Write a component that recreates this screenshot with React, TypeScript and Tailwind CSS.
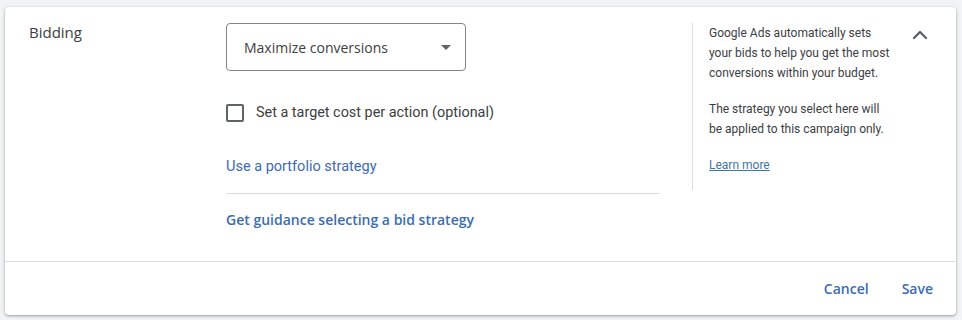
import { ChevronUp } from 'lucide-react';

export default function App() {
  const blue = 'text-[#3d6bb3]';

  return (
    <div className="w-[962px] h-[320px] bg-[#f1f3f4] pt-[7px] pl-[5px] font-['Roboto',sans-serif]">
      <div className="w-[951px] h-[308px] bg-white rounded-[4px] shadow-[0_1px_2px_rgba(60,64,67,0.3),0_1px_3px_1px_rgba(60,64,67,0.15)] flex flex-col">
        <div className="h-[255px] flex pl-6 pt-4 border-b border-[#dadce0]">
          <div className="w-[197px] font-['Open_Sans',sans-serif] text-[15px] leading-[18px] text-[#3c4043]">
            Bidding
          </div>

          <div className="w-[434px] flex flex-col">
            <button className="w-[240px] h-[48px] border border-[#80868b] rounded-[4px] flex items-center justify-between pl-[17px] pr-[14px] text-left">
              <span className="font-['Open_Sans',sans-serif] text-[14px] text-[#3c4043]">Maximize conversions</span>
              <svg width="10" height="5" viewBox="0 0 10 5" className="mt-[1px]">
                <path d="M0 0 L10 0 L5 5 Z" fill="#5f6368" />
              </svg>
            </button>

            <label className="mt-[32px] flex items-center gap-3 h-[20px]">
              <span className="w-[18px] h-[18px] border-2 border-[#5f6368] rounded-[2px]" />
              <span className="text-[14.4px] text-[#3c4043]">Set a target cost per action (optional)</span>
            </label>

            <a className={`mt-[34px] text-[14.5px] leading-5 ${blue}`}>Use a portfolio strategy</a>

            <div className="mt-[16px] border-t border-[#dadce0]" />

            <a className={`mt-[16px] font-['Open_Sans',sans-serif] font-semibold text-[14px] leading-5 ${blue}`}>
              Get guidance selecting a bid strategy
            </a>
          </div>

          <div className="ml-[32px] h-[167px] border-l border-[#dadce0]" />

          <div className="pl-[16px] w-[200px] text-[12px] leading-5 text-[#3c4043]">
            <p>Google Ads automatically sets your bids to help you get the most conversions within your budget.</p>
            <p className="mt-4">The strategy you select here will be applied to this campaign only.</p>
            <p className="mt-4">
              <a className="underline text-[#3b77a8]">Learn more</a>
            </p>
          </div>

          <div className="ml-[15px]">
            <ChevronUp size={24} strokeWidth={2.4} className="text-[#5f6368]" />
          </div>
        </div>

        <div className="flex-1 flex items-center justify-end gap-[33px] pr-[23px] font-['Open_Sans',sans-serif] font-semibold text-[14px]">
          <button className={blue}>Cancel</button>
          <button className={blue}>Save</button>
        </div>
      </div>
    </div>
  );
}
